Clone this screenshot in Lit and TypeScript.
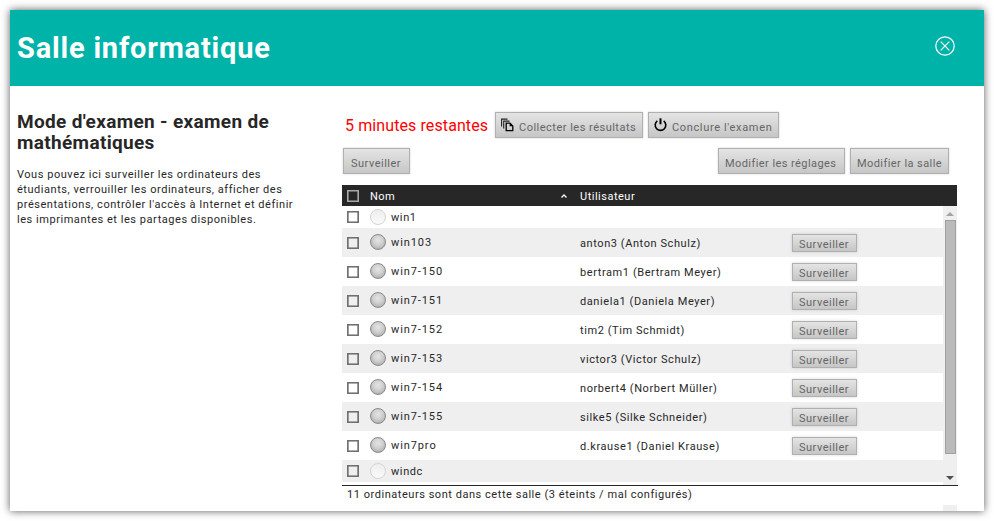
import { LitElement, html, css, svg } from "lit";
import { customElement } from "lit/decorators.js";

interface Computer { name: string; user?: string }

const computers: Computer[] = [
  { name: "win1" },
  { name: "win103", user: "anton3 (Anton Schulz)" },
  { name: "win7-150", user: "bertram1 (Bertram Meyer)" },
  { name: "win7-151", user: "daniela1 (Daniela Meyer)" },
  { name: "win7-152", user: "tim2 (Tim Schmidt)" },
  { name: "win7-153", user: "victor3 (Victor Schulz)" },
  { name: "win7-154", user: "norbert4 (Norbert Müller)" },
  { name: "win7-155", user: "silke5 (Silke Schneider)" },
  { name: "win7pro", user: "d.krause1 (Daniel Krause)" },
  { name: "windc" },
];

const collectIcon = svg`<svg class="icon" width="13" height="14" viewBox="0 0 13 14" fill="none">
  <path d="M.6 8.5V1.1H6.5M2.7 10.5V3.1H8.5" stroke="#222" stroke-width="1.1"/>
  <path d="M5.2 5.2H9L11.8 8V12.7H5.2Z" stroke="#000" stroke-width="1.3"/><path d="M8.7 5V8.2H12Z" fill="#000"/>
</svg>`;
const powerIcon = svg`<svg class="icon" width="13" height="14" viewBox="0 0 13 14" fill="none" stroke="#000">
  <path d="M3.3 2.9A5.3 5.3 0 1 0 9.7 2.9" stroke-width="1.6"/><path d="M6.5 0.3V6.3" stroke-width="2"/>
</svg>`;

@customElement("app-root")
export class AppRoot extends LitElement {
  static styles = css`
    :host { display: block; height: 521px; padding: 10px; box-sizing: border-box; background: #fff; overflow: hidden;
      font: 11px/15px Roboto, sans-serif; color: #272727; letter-spacing: .3px; }
    * { box-sizing: border-box; }
    .window { width: 974px; height: 501px; background: #fff; box-shadow: 0 0 8px rgba(0,0,0,.65); overflow: hidden; }
    header { height: 76px; background: #00b3a9; color: #fff; display: flex; align-items: center; justify-content: space-between; padding: 0 29px 4px 7px; }
    h1 { font-size: 29px; line-height: 36px; font-weight: 700; margin: 3px 0 0; letter-spacing: .8px; }
    .close { display: block; }
    .body { display: flex; height: 425px; }
    aside { width: 332px; padding: 25px 0 0 7px; }
    h2 { font-size: 19px; line-height: 21px; margin: 0 0 14px; letter-spacing: .33px; white-space: nowrap; }
    p { margin: 0; white-space: nowrap; letter-spacing: .54px; }
    main { width: 615px; padding-top: 26px; display: flex; flex-direction: column; }
    .bar { display: flex; height: 26px; padding: 0 8px 0 1px; margin-bottom: 10px; gap: 5px; flex: none; }
    .time { color: #f00; font-size: 16px; line-height: 28px; width: 147px; padding-left: 2px; white-space: nowrap; letter-spacing: .1px; }
    .btn { display: flex; align-items: center; height: 26px; border: 1px solid #b0b0b0; background: linear-gradient(#e4e4e4, #c6c6c6);
      box-shadow: 0 0 2px rgba(0,0,0,.18); color: #666; padding: 4px 0 0 7px; white-space: nowrap; letter-spacing: .49px; }
    .icon { margin: -4px 5px 0 -2px; flex: none; }
    .collect { width: 148px; } .conclude { width: 131px; } .watch { width: 67px; }
    .settings { width: 127px; margin-left: auto; } .room { width: 99px; }
    .settings, .room { padding-left: 6px; letter-spacing: .43px; }
    .conclude { letter-spacing: .65px; }
    .row, .head { display: grid; grid-template-columns: 28px 210px 212px 65px; align-items: center; white-space: nowrap; }
    .head { height: 21px; margin-top: 1px; background: #272727; color: #fff; flex: none; padding-top: 1px; letter-spacing: .5px; }
    .check { width: 12px; height: 12px; border: 1px solid #707070; box-shadow: inset 0 0 0 .6px #606060; margin-left: 5px; }
    .head .check { border-color: #aaa; box-shadow: inset 0 0 0 .6px #aaa; margin-top: -1px; }
    .sort { display: flex; justify-content: space-between; align-items: center; padding-right: 13px; }
    .sort svg { margin-top: -1px; }
    .grid { display: flex; height: 280px; border-bottom: 1px solid #272727; flex: none; width: 616px; }
    .rows { width: 601px; }
    .row { height: 29px; background: #efefef; }
    .row.idle { height: 22px; }
    .row:nth-child(odd) { background: #fff; }
    .name { display: flex; align-items: center; gap: 5px; padding-bottom: 1px; letter-spacing: .9px; }
    .idle .name { padding: 0; letter-spacing: .6px; }
    .user { letter-spacing: .58px; padding-top: 1px; }
    .ball { width: 16px; height: 16px; border-radius: 50%; border: 1px solid #8a8a8a; background: radial-gradient(circle at 50% 38%, #e4e4e4 0, #d2d2d2 40%, #a0a0a0 100%); }
    .idle .ball { border-color: #d4d4d4; background: linear-gradient(#eee, #fafafa); }
    .row .btn { height: 18px; padding: 3px 0 0 6px; box-shadow: 0 0 3px rgba(0,0,0,.15); margin-top: 1px; }
    .scroll { width: 14px; background: #efefef; display: flex; flex-direction: column; align-items: center; }
    .thumb { width: 11px; height: 234px; background: #bababa; border: 1px solid #a0a0a0; }
    .arrow { width: 14px; height: 14px; flex: none; display: block; }
    .down { margin-top: 17px; }
    .footer { padding: 1px 0 0 5px; height: 19px; letter-spacing: .54px; }
    .rest { margin-left: 601px; width: 14px; height: 6px; background: #efefef; }
  `;

  render() {
    return html`<div class="window">
      <header><h1>Salle informatique</h1>
        <svg class="close" width="20" height="20" viewBox="0 0 20 20" fill="none" stroke="#fff" stroke-width="1.2"><circle cx="10" cy="10" r="9.2"/><path d="M5.7 5.7L14.3 14.3M14.3 5.7L5.7 14.3"/></svg>
      </header>
      <div class="body">
        <aside>
          <h2>Mode d'examen - examen de<br>mathématiques</h2>
          <p>Vous pouvez ici surveiller les ordinateurs des<br>étudiants, verrouiller les ordinateurs, afficher des<br>présentations, contrôler l'accès à Internet et définir<br>les imprimantes et les partages disponibles.</p>
        </aside>
        <main>
          <div class="bar"><div class="time">5 minutes restantes</div>
            <div class="btn collect">${collectIcon}Collecter les résultats</div>
            <div class="btn conclude">${powerIcon}Conclure l'examen</div></div>
          <div class="bar"><div class="btn watch">Surveiller</div><div class="btn settings">Modifier les réglages</div><div class="btn room">Modifier la salle</div></div>
          <div class="head"><div class="check"></div><div class="sort">Nom
            <svg width="6" height="4" viewBox="0 0 6 4" fill="none" stroke="#fff" stroke-width="1.3"><path d="M.5 3.5L3 1L5.5 3.5"/></svg></div><div>Utilisateur</div></div>
          <div class="grid">
            <div class="rows">${computers.map((c) => html`<div class="row ${c.user ? "" : "idle"}">
              <div class="check"></div><div class="name"><span class="ball"></span>${c.name}</div>
              <div class="user">${c.user ?? ""}</div>${c.user ? html`<div class="btn">Surveiller</div>` : ""}</div>`)}</div>
            <div class="scroll">
              <svg class="arrow" viewBox="0 0 14 14"><path d="M3 10L7 6L11 10Z" fill="#a3a3a3"/></svg>
              <div class="thumb"></div>
              <svg class="arrow down" viewBox="0 0 14 14"><path d="M3 5L7 9L11 5Z" fill="#505050"/></svg>
            </div>
          </div>
          <div class="footer">11 ordinateurs sont dans cette salle (3 éteints / mal configurés)</div>
          <div class="rest"></div>
        </main>
      </div>
    </div>`;
  }
}
